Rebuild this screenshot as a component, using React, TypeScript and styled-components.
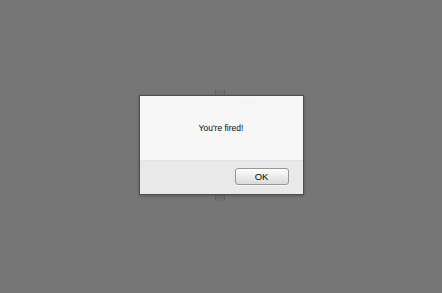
import styled, { createGlobalStyle } from 'styled-components';

const GlobalStyle = createGlobalStyle`
  html, body {
    margin: 0;
    padding: 0;
    height: 100%;
  }
  body {
    background: #767676;
    font-family: 'Liberation Sans', Arial, sans-serif;
  }
  #root {
    height: 100%;
  }
`;

const Page = styled.div`
  height: 100%;
  display: flex;
  justify-content: center;
  align-items: center;
`;

const Column = styled.div`
  width: 10px;
  height: 111px;
  margin-left: -2px;
  margin-top: -3px;
  background: #6f6f6f;
  border-left: 1px solid #636363;
  border-right: 1px solid #636363;
  box-sizing: border-box;
`;

const Overlay = styled.div`
  position: fixed;
  inset: 0;
  display: flex;
  justify-content: center;
  align-items: center;
  padding-bottom: 4px;
`;

const Dialog = styled.div`
  width: 165px;
  height: 100px;
  box-sizing: border-box;
  border: 1px solid #4e4e4e;
  display: flex;
  flex-direction: column;
  box-shadow: 0 1px 3px rgba(0, 0, 0, 0.25);
`;

const Message = styled.div`
  flex: 0 0 64px;
  background: #f7f7f7;
  display: flex;
  justify-content: center;
  padding-top: 27px;
  box-sizing: border-box;
  font-size: 8.5px;
  color: #0a0a0a;
  position: relative;
`;

const Ghost = styled.span`
  position: absolute;
  top: 2px;
  left: 101px;
  font-size: 7px;
  color: #f1f1f1;
`;

const Footer = styled.div`
  flex: 1;
  background: #e9e9e9;
  border-top: 1px solid #e2e2e2;
  display: flex;
  justify-content: flex-end;
  align-items: flex-start;
  padding: 7px 14px 0 0;
`;

const Button = styled.button`
  width: 54px;
  height: 17px;
  padding: 0;
  border: 1px solid #979797;
  border-radius: 3px;
  background: linear-gradient(#fdfdfd, #dadada);
  font-family: 'Liberation Sans', Arial, sans-serif;
  font-size: 9.5px;
  color: #0a0a0a;
  box-shadow: 0 1px 0 rgba(255, 255, 255, 0.6);
`;

export default function App() {
  return (
    <>
      <GlobalStyle />
      <Page>
        <Column />
      </Page>
      <Overlay>
        <Dialog>
          <Message>
            <Ghost>Try it</Ghost>
            You're fired!
          </Message>
          <Footer>
            <Button>OK</Button>
          </Footer>
        </Dialog>
      </Overlay>
    </>
  );
}
